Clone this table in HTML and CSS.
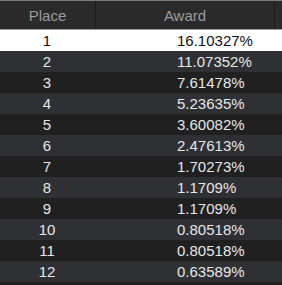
FILE: index.html
```html
<!DOCTYPE html>
<html>
<head>
<meta charset="utf-8">
<link rel="stylesheet" href="styles.css">
</head>
<body>
<div class="table">
  <div class="head">
    <div class="hcell place">Place</div>
    <div class="hcell award">Award</div>
    <div class="hcell gutter"></div>
  </div>
  <div class="row"><div class="c-place">1</div><div class="c-award">16.10327%</div></div>
  <div class="row"><div class="c-place">2</div><div class="c-award">11.07352%</div></div>
  <div class="row"><div class="c-place">3</div><div class="c-award">7.61478%</div></div>
  <div class="row"><div class="c-place">4</div><div class="c-award">5.23635%</div></div>
  <div class="row"><div class="c-place">5</div><div class="c-award">3.60082%</div></div>
  <div class="row"><div class="c-place">6</div><div class="c-award">2.47613%</div></div>
  <div class="row"><div class="c-place">7</div><div class="c-award">1.70273%</div></div>
  <div class="row"><div class="c-place">8</div><div class="c-award">1.1709%</div></div>
  <div class="row"><div class="c-place">9</div><div class="c-award">1.1709%</div></div>
  <div class="row"><div class="c-place">10</div><div class="c-award">0.80518%</div></div>
  <div class="row"><div class="c-place">11</div><div class="c-award">0.80518%</div></div>
  <div class="row"><div class="c-place">12</div><div class="c-award">0.63589%</div></div>
</div>
</body>
</html>
```
FILE: styles.css
```css
html, body {
  margin: 0;
  padding: 0;
  background: #202020;
  overflow: hidden;
}
.table {
  width: 282px;
  font-family: "Liberation Sans", Arial, sans-serif;
  font-size: 15px;
}
.head {
  display: grid;
  grid-template-columns: 96px 179px 7px;
  height: 28px;
  background: #2a2a2a;
  border-top: 1px solid #7c7c7c;
  border-bottom: 1px solid #9a9a9a;
  color: #9c9c9c;
}
.hcell {
  display: flex;
  align-items: center;
  justify-content: center;
  border-right: 1px solid #1a1a1a;
}
.hcell.gutter {
  border-right: none;
}
.row {
  display: grid;
  grid-template-columns: 94px 1fr;
  height: 21px;
  align-items: center;
  color: #e6e6e6;
  background: #202020;
}
.row:nth-child(odd) {
  background: #2f3033;
}
.row:nth-child(2) {
  background: #ffffff;
  color: #111111;
}
.c-place {
  text-align: center;
}
.c-award {
  padding-left: 83px;
}
```
